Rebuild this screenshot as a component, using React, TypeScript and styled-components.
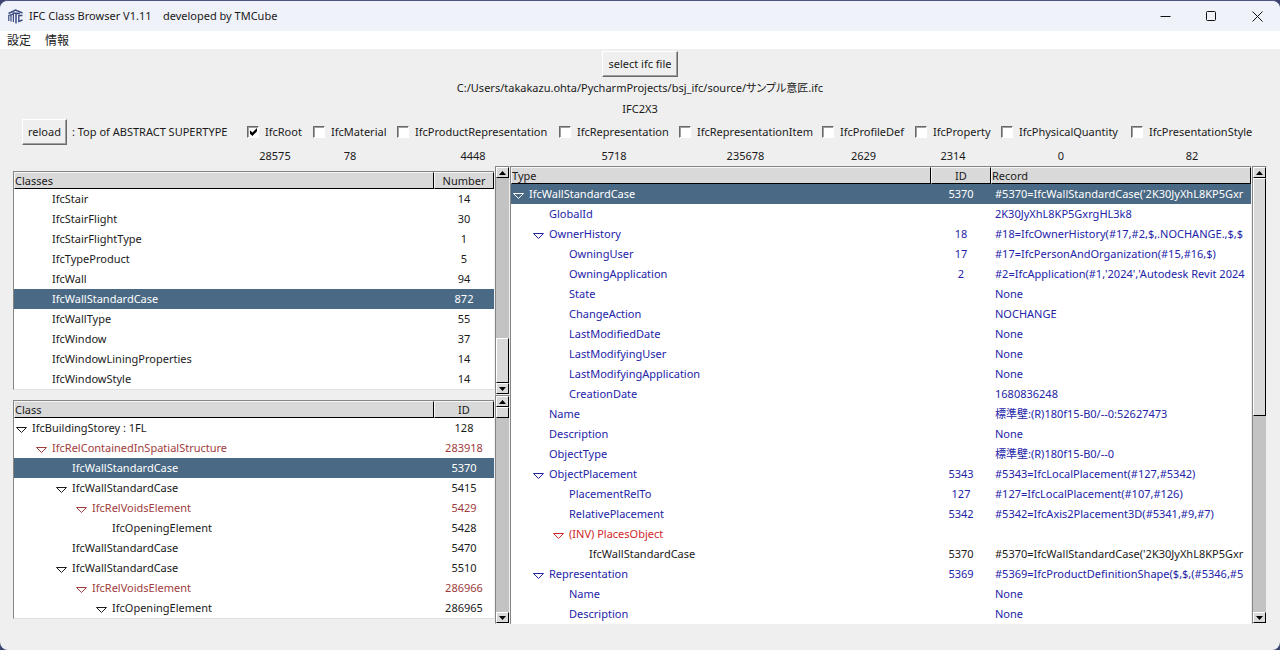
import React from "react";
import styled, { createGlobalStyle, css } from "styled-components";

const INK = "#1a1a1a";
const BLUE = "#2323a8";
const BROWN = "#a03c3c";
const RED = "#d02828";
const SELECTED = "#4a6984";

const GlobalStyle = createGlobalStyle`
  * { box-sizing: border-box; }
  body {
    margin: 0;
    background: #3d4470;
    color: ${INK};
    font-family: "Noto Sans", "Noto Sans CJK JP", sans-serif;
    font-size: 11px;
    line-height: 20px;
    font-feature-settings: "palt";
  }
  button, input { font: inherit; color: inherit; }
`;

const Window = styled.div`
  display: flex;
  flex-direction: column;
  min-height: 100vh;
  border-top: 1px solid #4d5482;
  border-radius: 8px;
  background: #efefef;
  overflow: hidden;
`;

const TitleBar = styled.header`
  display: flex;
  align-items: center;
  height: 30px;
  padding-left: 8px;
  background: #f0f2f9;
`;

const Title = styled.h1`
  flex: 1;
  margin: 0 0 0 6px;
  font-size: 11px;
  font-weight: 400;
  white-space: pre;
`;

const CaptionButton = styled.button`
  display: grid;
  place-items: center;
  width: 46px;
  height: 30px;
  padding: 0;
  border: 0;
  background: transparent;
`;

const MenuBar = styled.nav`
  display: flex;
  gap: 14px;
  height: 18px;
  padding-left: 7px;
  background: #fff;
`;

const MenuItem = styled.button`
  padding: 0;
  border: 0;
  background: transparent;
  font-size: 12px;
  line-height: 20px;
`;

const PushButton = styled.button`
  height: 26px;
  padding: 0 5px;
  border: 1px solid;
  border-color: #fff #696969 #696969 #fff;
  background: #efefef;
  box-shadow: inset -1px -1px 0 #a0a0a0;
  line-height: 22px;
  white-space: nowrap;
`;

const FileArea = styled.section`
  display: flex;
  flex-direction: column;
  align-items: center;
  padding-top: 2px;
`;

const FileText = styled.p`
  margin: 0;
  line-height: 21px;
`;

const FilterBar = styled.section`
  display: flex;
  align-items: flex-start;
  padding: 0 17px 0 22px;
`;

const FilterCaption = styled.span`
  width: 180px;
  padding-left: 5px;
  line-height: 26px;
  white-space: nowrap;
`;

const FilterGrid = styled.div`
  flex: 1;
  display: grid;
  grid-template-columns: 66fr 84fr 162fr 120fr 143fr 93fr 86fr 130fr 132fr;
`;

const Filter = styled.div`
  display: flex;
  flex-direction: column;
  align-items: center;
  min-width: 0;
  padding-right: 10px;
`;

const FilterLabel = styled.label`
  display: flex;
  align-items: center;
  gap: 6px;
  width: 100%;
  height: 26px;
  white-space: nowrap;
`;

const CheckBox = styled.input`
  appearance: none;
  flex: none;
  position: relative;
  width: 12px;
  height: 12px;
  margin: 0;
  border: 1px solid;
  border-color: #696969 #fff #fff #696969;
  background: #fff;
  box-shadow: inset 1px 1px 0 #a0a0a0;
  &:checked::after {
    content: "";
    position: absolute;
    inset: 1px 1px 1px 2px;
    background: #000;
    clip-path: polygon(0 28%, 35% 56%, 100% 0, 100% 42%, 35% 100%, 0 72%);
  }
`;

const Count = styled.output`
  line-height: 21px;
`;

const Panels = styled.main`
  flex: 1;
  display: grid;
  grid-template-columns: 497fr 757fr;
  align-items: start;
  padding: 0 13px 26px;
`;

const Stack = styled.div`
  display: flex;
  flex-direction: column;
  min-width: 0;
`;

const Pane = styled.section`
  display: flex;
  min-width: 0;
`;

const TableFrame = styled.div<{ $inset?: boolean }>`
  flex: 1;
  min-width: 0;
  margin: ${(p) => (p.$inset ? "5px 1px 5px 0" : "0 1px 0 0")};
  border-top: 1px solid #858585;
  border-left: 1px solid #858585;
  border-bottom: ${(p) => (p.$inset ? "1px solid #e0e0e0" : "0")};
  background: #fff;
`;

const Table = styled.table`
  width: 100%;
  table-layout: fixed;
  border-collapse: separate;
  border-spacing: 0;
`;

const Col = styled.col<{ $width?: number }>`
  ${(p) => p.$width && css`width: ${p.$width}px;`}
`;

const Head = styled.th<{ $center?: boolean }>`
  height: 17px;
  padding: 0;
  border: 1px solid;
  border-color: #f6f6f6 #000 #000 #f6f6f6;
  background: #d9d9d9;
  font-weight: 400;
  line-height: 15px;
  text-align: ${(p) => (p.$center ? "center" : "left")};
`;

const Row = styled.tr<{ $color: string; $selected?: boolean }>`
  height: 20px;
  color: ${(p) => (p.$selected ? "#fff" : p.$color)};
  background: ${(p) => (p.$selected ? SELECTED : "transparent")};
`;

const Cell = styled.td<{ $center?: boolean }>`
  height: 20px;
  padding: 0 4px;
  text-align: ${(p) => (p.$center ? "center" : "left")};
`;

const TreeCell = styled.td<{ $level: number }>`
  height: 20px;
  padding: 0 0 0 ${(p) => p.$level * 20}px;
`;

const Clip = styled.div`
  height: 20px;
  overflow: hidden;
  white-space: nowrap;
`;

const Node = styled(Clip)`
  display: flex;
`;

const ArrowSlot = styled.span`
  flex: none;
  width: 18px;
  padding: 3px 0 0 2px;
`;

const ScrollFrame = styled.div`
  flex: none;
  display: flex;
  flex-direction: column;
  width: 15px;
  border: 1px solid;
  border-color: #858585 #efefef #efefef #858585;
  background: #c3c3c3;
`;

const ScrollButton = styled.button`
  display: grid;
  place-items: center;
  width: 13px;
  height: 11px;
  padding: 0;
  border: 1px solid;
  border-color: #fff #000 #000 #fff;
  background: #d9d9d9;
`;

const Track = styled.div<{ $before: number; $size: number; $after: number }>`
  flex: 1;
  display: grid;
  grid-template-rows: ${(p) => `${p.$before}fr ${p.$size}fr ${p.$after}fr`};
`;

const Thumb = styled.div`
  grid-row: 2;
  border: 1px solid;
  border-color: #fff #000 #000 #fff;
  background: #d9d9d9;
`;

type Item = {
  text: string;
  level: number;
  open?: boolean;
  color?: string;
  selected?: boolean;
  id?: string;
  record?: string;
};

const filters: [string, string][] = [
  ["IfcRoot", "28575"],
  ["IfcMaterial", "78"],
  ["IfcProductRepresentation", "4448"],
  ["IfcRepresentation", "5718"],
  ["IfcRepresentationItem", "235678"],
  ["IfcProfileDef", "2629"],
  ["IfcProperty", "2314"],
  ["IfcPhysicalQuantity", "0"],
  ["IfcPresentationStyle", "82"],
];

const classes: Item[] = [
  { text: "IfcStair", level: 1, id: "14" },
  { text: "IfcStairFlight", level: 1, id: "30" },
  { text: "IfcStairFlightType", level: 1, id: "1" },
  { text: "IfcTypeProduct", level: 1, id: "5" },
  { text: "IfcWall", level: 1, id: "94" },
  { text: "IfcWallStandardCase", level: 1, id: "872", selected: true },
  { text: "IfcWallType", level: 1, id: "55" },
  { text: "IfcWindow", level: 1, id: "37" },
  { text: "IfcWindowLiningProperties", level: 1, id: "14" },
  { text: "IfcWindowStyle", level: 1, id: "14" },
];

const instances: Item[] = [
  { text: "IfcBuildingStorey : 1FL", level: 0, open: true, id: "128" },
  { text: "IfcRelContainedInSpatialStructure", level: 1, open: true, id: "283918", color: BROWN },
  { text: "IfcWallStandardCase", level: 2, id: "5370", selected: true },
  { text: "IfcWallStandardCase", level: 2, open: true, id: "5415" },
  { text: "IfcRelVoidsElement", level: 3, open: true, id: "5429", color: BROWN },
  { text: "IfcOpeningElement", level: 4, id: "5428" },
  { text: "IfcWallStandardCase", level: 2, id: "5470" },
  { text: "IfcWallStandardCase", level: 2, open: true, id: "5510" },
  { text: "IfcRelVoidsElement", level: 3, open: true, id: "286966", color: BROWN },
  { text: "IfcOpeningElement", level: 4, open: true, id: "286965" },
];

const attributes: Item[] = [
  { text: "IfcWallStandardCase", level: 0, open: true, id: "5370", record: "#5370=IfcWallStandardCase('2K30JyXhL8KP5Gxr", selected: true },
  { text: "GlobalId", level: 1, record: "2K30JyXhL8KP5GxrgHL3k8", color: BLUE },
  { text: "OwnerHistory", level: 1, open: true, id: "18", record: "#18=IfcOwnerHistory(#17,#2,$,.NOCHANGE.,$,$", color: BLUE },
  { text: "OwningUser", level: 2, id: "17", record: "#17=IfcPersonAndOrganization(#15,#16,$)", color: BLUE },
  { text: "OwningApplication", level: 2, id: "2", record: "#2=IfcApplication(#1,'2024','Autodesk Revit 2024", color: BLUE },
  { text: "State", level: 2, record: "None", color: BLUE },
  { text: "ChangeAction", level: 2, record: "NOCHANGE", color: BLUE },
  { text: "LastModifiedDate", level: 2, record: "None", color: BLUE },
  { text: "LastModifyingUser", level: 2, record: "None", color: BLUE },
  { text: "LastModifyingApplication", level: 2, record: "None", color: BLUE },
  { text: "CreationDate", level: 2, record: "1680836248", color: BLUE },
  { text: "Name", level: 1, record: "標準壁:(R)180f15-B0/--0:52627473", color: BLUE },
  { text: "Description", level: 1, record: "None", color: BLUE },
  { text: "ObjectType", level: 1, record: "標準壁:(R)180f15-B0/--0", color: BLUE },
  { text: "ObjectPlacement", level: 1, open: true, id: "5343", record: "#5343=IfcLocalPlacement(#127,#5342)", color: BLUE },
  { text: "PlacementRelTo", level: 2, id: "127", record: "#127=IfcLocalPlacement(#107,#126)", color: BLUE },
  { text: "RelativePlacement", level: 2, id: "5342", record: "#5342=IfcAxis2Placement3D(#5341,#9,#7)", color: BLUE },
  { text: "(INV) PlacesObject", level: 2, open: true, color: RED },
  { text: "IfcWallStandardCase", level: 3, id: "5370", record: "#5370=IfcWallStandardCase('2K30JyXhL8KP5Gxr" },
  { text: "Representation", level: 1, open: true, id: "5369", record: "#5369=IfcProductDefinitionShape($,$,(#5346,#5", color: BLUE },
  { text: "Name", level: 2, record: "None", color: BLUE },
  { text: "Description", level: 2, record: "None", color: BLUE },
];

function Logo() {
  return (
    <svg width="15" height="15" viewBox="0 0 15 15" fill="none" stroke="#3a4a80" aria-hidden="true">
      <path d="M0.5 4.5 L7.5 1 L14.5 4" strokeWidth="1.4" />
      <path d="M0.8 12 V6.5 L5.4 5 V13 M3 6 V12.5" strokeWidth="1.2" />
      <path d="M4.5 4 L12 4.5 M8 4 V14.5" strokeWidth="1.5" />
      <path d="M14.5 6.5 L10.8 6.5 V12.5 L14.5 11" strokeWidth="1.4" />
    </svg>
  );
}

function TreeArrow() {
  return (
    <svg width="12" height="14" viewBox="0 0 12 14" fill="none" stroke="currentColor" aria-hidden="true">
      <path d="M0.5 6.5 H10.5 L5.5 11.5 Z" />
    </svg>
  );
}

function ScrollBar({ label, before, size, after }: { label: string; before: number; size: number; after: number }) {
  return (
    <ScrollFrame>
      <ScrollButton type="button" aria-label={`${label}: scroll up`}>
        <svg width="7" height="4" viewBox="0 0 7 4" aria-hidden="true"><path d="M0 4 L3.5 0 L7 4 Z" /></svg>
      </ScrollButton>
      <Track $before={before} $size={size} $after={after}>
        <Thumb />
      </Track>
      <ScrollButton type="button" aria-label={`${label}: scroll down`}>
        <svg width="7" height="4" viewBox="0 0 7 4" aria-hidden="true"><path d="M0 0 L3.5 4 L7 0 Z" /></svg>
      </ScrollButton>
    </ScrollFrame>
  );
}

function TreeTable({ heads, items, treeWidth }: { heads: string[]; items: Item[]; treeWidth?: number }) {
  const withRecord = heads.length > 2;
  return (
    <Table>
      <colgroup>
        <Col $width={treeWidth} />
        <Col $width={60} />
        {withRecord && <Col />}
      </colgroup>
      <thead>
        <tr>
          {heads.map((h, i) => (
            <Head key={h} scope="col" $center={i === 1}>{h}</Head>
          ))}
        </tr>
      </thead>
      <tbody>
        {items.map((item, i) => (
          <Row key={i} $color={item.color ?? INK} $selected={item.selected}>
            <TreeCell $level={item.level}>
              <Node>
                <ArrowSlot>{item.open && <TreeArrow />}</ArrowSlot>
                {item.text}
              </Node>
            </TreeCell>
            <Cell $center>{item.id}</Cell>
            {withRecord && <Cell><Clip>{item.record}</Clip></Cell>}
          </Row>
        ))}
      </tbody>
    </Table>
  );
}

export default function App() {
  return (
    <>
      <GlobalStyle />
      <Window>
        <TitleBar>
          <Logo />
          <Title>{"IFC Class Browser V1.11    developed by TMCube"}</Title>
          <CaptionButton type="button" aria-label="Minimize">
            <svg width="11" height="11" viewBox="0 0 11 11" stroke="#111"><path d="M0.5 5.5H10.5" /></svg>
          </CaptionButton>
          <CaptionButton type="button" aria-label="Maximize">
            <svg width="11" height="11" viewBox="0 0 11 11" fill="none" stroke="#111"><rect x="0.5" y="0.5" width="9" height="9" rx="1" /></svg>
          </CaptionButton>
          <CaptionButton type="button" aria-label="Close">
            <svg width="11" height="11" viewBox="0 0 11 11" stroke="#111"><path d="M0.5 0.5L10.5 10.5M10.5 0.5L0.5 10.5" /></svg>
          </CaptionButton>
        </TitleBar>
        <MenuBar>
          <MenuItem type="button">設定</MenuItem>
          <MenuItem type="button">情報</MenuItem>
        </MenuBar>
        <FileArea>
          <PushButton type="button">select ifc file</PushButton>
          <FileText>C:/Users/takakazu.ohta/PycharmProjects/bsj_ifc/source/サンプル意匠.ifc</FileText>
          <FileText>IFC2X3</FileText>
        </FileArea>
        <FilterBar>
          <PushButton type="button">reload</PushButton>
          <FilterCaption>: Top of ABSTRACT SUPERTYPE</FilterCaption>
          <FilterGrid>
            {filters.map(([name, count], i) => (
              <Filter key={name}>
                <FilterLabel>
                  <CheckBox type="checkbox" defaultChecked={i === 0} />
                  {name}
                </FilterLabel>
                <Count>{count}</Count>
              </Filter>
            ))}
          </FilterGrid>
        </FilterBar>
        <Panels>
          <Stack>
            <Pane>
              <TableFrame $inset><TreeTable heads={["Classes", "Number"]} items={classes} /></TableFrame>
              <ScrollBar label="Classes" before={160} size={45} after={0} />
            </Pane>
            <Pane>
              <TableFrame $inset><TreeTable heads={["Class", "ID"]} items={instances} /></TableFrame>
              <ScrollBar label="Class" before={0} size={11} after={194} />
            </Pane>
          </Stack>
          <Pane>
            <TableFrame><TreeTable heads={["Type", "ID", "Record"]} items={attributes} treeWidth={420} /></TableFrame>
            <ScrollBar label="Type" before={0} size={239} after={196} />
          </Pane>
        </Panels>
      </Window>
    </>
  );
}
